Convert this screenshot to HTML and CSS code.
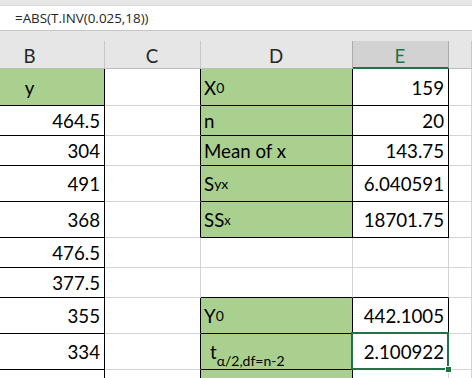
FILE: index.html
```html
<!DOCTYPE html>
<html>
<head>
<meta charset="utf-8">
<link rel="stylesheet" href="styles.css">
</head>
<body>
<div class="top"></div>
<div class="formula">=ABS(T.INV(0.025,18))</div>
<div class="gap"></div>
<div class="sheet">
  <div class="c hd ofs">B</div>
  <div class="c hd">C</div>
  <div class="c hd pre">D</div>
  <div class="c hd on">E</div>
  <div class="c hd"></div>

  <div class="c g rb bb ctr ofs">y</div>
  <div class="c rb"></div>
  <div class="c g rb bb">X<sub>0</sub></div>
  <div class="c rb bb num">159</div>
  <div class="c"></div>

  <div class="c rb bb num">464.5</div>
  <div class="c rb"></div>
  <div class="c g rb bb">n</div>
  <div class="c rb bb num">20</div>
  <div class="c"></div>

  <div class="c rb bb num">304</div>
  <div class="c rb"></div>
  <div class="c g rb bb">Mean of x</div>
  <div class="c rb bb num">143.75</div>
  <div class="c"></div>

  <div class="c rb bb num">491</div>
  <div class="c rb"></div>
  <div class="c g rb bb">S<sub>yx</sub></div>
  <div class="c rb bb num">6.040591</div>
  <div class="c"></div>

  <div class="c rb bb num">368</div>
  <div class="c rb"></div>
  <div class="c g rb bb">SS<sub class="small">x</sub></div>
  <div class="c rb bb num">18701.75</div>
  <div class="c"></div>

  <div class="c rb bb num">476.5</div>
  <div class="c"></div>
  <div class="c"></div>
  <div class="c"></div>
  <div class="c"></div>

  <div class="c rb bb num">377.5</div>
  <div class="c"></div>
  <div class="c bb"></div>
  <div class="c bb"></div>
  <div class="c"></div>

  <div class="c rb bb num">355</div>
  <div class="c rb"></div>
  <div class="c g rb bb">Y<sub>0</sub></div>
  <div class="c rb bb num">442.1005</div>
  <div class="c"></div>

  <div class="c rb bb num">334</div>
  <div class="c rb"></div>
  <div class="c g rb bb"><span class="indent">t<sub class="low">α/2,df=n-2</sub></span></div>
  <div class="c rb bb num sel">2.100922<span class="handle"></span></div>
  <div class="c"></div>

  <div class="c rb last"></div>
  <div class="c rb last"></div>
  <div class="c g rb last"></div>
  <div class="c last"></div>
  <div class="c last"></div>
</div>
</body>
</html>
```
FILE: styles.css
```css
html, body {
  margin: 0;
  padding: 0;
  background: #ffffff;
}
body {
  width: 472px;
  height: 378px;
  overflow: hidden;
}
.top {
  height: 5px;
  background: #e6e6e6;
}
.formula {
  height: 26px;
  box-sizing: border-box;
  border-top: 1px solid #d9d9d9;
  border-bottom: 1px solid #c6c6c6;
  background: #ffffff;
  padding-left: 15px;
  font-family: "Open Sans", sans-serif;
  font-size: 13.4px;
  line-height: 24px;
  color: #262626;
}
.gap {
  height: 10px;
  background: #e6e6e6;
}
.sheet {
  display: grid;
  grid-template-columns: 105px 96px 152px 96px 23px;
  grid-template-rows: 28px 37px 30px 30px 36px 36px 30px 30px 36px 36px 8px;
  font-family: "Lato", sans-serif;
  font-size: 18.7px;
  color: #000;
}
.c {
  box-sizing: border-box;
  border-right: 1px solid #d4d4d4;
  border-bottom: 1px solid #d4d4d4;
  display: flex;
  align-items: center;
  padding: 1px 4px 0 3px;
  line-height: 22px;
  white-space: nowrap;
  min-width: 0;
}
.c.last {
  border-bottom: none;
}
.hd {
  background: #e6e6e6;
  border-right-color: #c6c6c6;
  border-bottom-color: #bdbdbd;
  justify-content: center;
  padding-top: 3px;
  color: #262626;
}
.hd.pre {
  border-right-color: #ababab;
}
.hd.on {
  background: #d2d2d2;
  border-right-color: #ababab;
  border-bottom: 2px solid #217346;
  color: #217346;
}
.ofs {
  padding-right: 48px;
}
.g {
  background: #a9d08e;
}
.rb {
  border-right-color: #000;
}
.bb {
  border-bottom-color: #000;
}
.num {
  justify-content: flex-end;
}
.ctr {
  justify-content: center;
}
sub {
  font-size: 14px;
  line-height: 0;
  vertical-align: -5px;
}
sub.small {
  font-size: 13px;
}
sub.low {
  vertical-align: -7px;
}
.indent {
  padding-left: 6px;
}
.sel {
  position: relative;
}
.sel::after {
  content: "";
  position: absolute;
  left: -2px;
  top: -2px;
  right: -1px;
  bottom: -1px;
  border: 2px solid #217346;
}
.handle {
  position: absolute;
  right: -4px;
  bottom: -4px;
  width: 5px;
  height: 5px;
  background: #217346;
  border: 1px solid #ffffff;
  z-index: 2;
}
```
